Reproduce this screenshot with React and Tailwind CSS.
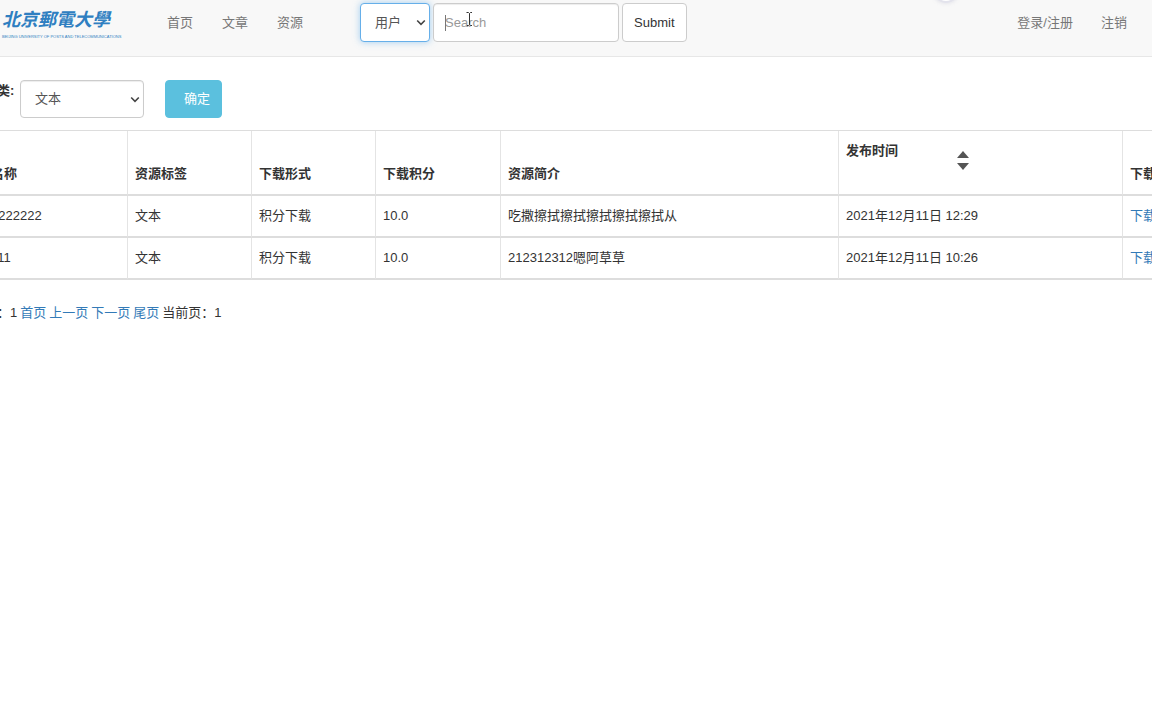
const columns = ["名称", "资源标签", "下载形式", "下载积分", "资源简介", "发布时间", "下载"]

const resources = [
  { name: "2222222", tag: "文本", type: "积分下载", points: "10.0", intro: "吃撒擦拭擦拭擦拭擦拭擦拭从", time: "2021年12月11日 12:29" },
  { name: "111", tag: "文本", type: "积分下载", points: "10.0", intro: "212312312嗯阿草草", time: "2021年12月11日 10:26" },
]

function Chevron() {
  return (
    <svg className="pointer-events-none absolute right-1 top-4 h-2 w-[10px]" viewBox="0 0 10 8" fill="none" stroke="#444" strokeWidth="1.6" aria-hidden="true">
      <path d="M1.2 1.5 L5 5.3 L8.8 1.5" />
    </svg>
  )
}

function Logo() {
  return (
    <a href="#" className="block w-[120px] shrink-0 whitespace-nowrap pt-[3px] pl-[2px] text-[#2f7fc1]">
      <span className="block text-lg leading-7 font-bold italic">北京郵電大學</span>
      <span className="block font-['Liberation_Sans_Narrow','Liberation_Sans',sans-serif] text-[4px] leading-[6px]">
        BEIJING UNIVERSITY OF POSTS AND TELECOMMUNICATIONS
      </span>
    </a>
  )
}

function Navbar() {
  return (
    <nav className="relative flex h-[57px] items-start border-b border-[#e7e7e7] bg-[#f8f8f8] pt-[3px] pr-[25px] text-[#777]">
      <Logo />
      <div className="ml-[47px] flex gap-[29px] leading-10">
        <a href="#">首页</a>
        <a href="#">文章</a>
        <a href="#">资源</a>
      </div>
      <form className="ml-[57px] flex gap-[3px]" onSubmit={(e) => e.preventDefault()}>
        <div className="relative">
          <select aria-label="搜索类型" className="block h-[39px] w-[70px] appearance-none rounded border border-[#66afe9] bg-white pl-[14px] text-[#555] shadow-[0_0_7px_rgba(102,175,233,0.6)] outline-none">
            <option>用户</option>
          </select>
          <Chevron />
        </div>
        <div className="relative">
          <input aria-label="Search" type="text" placeholder="Search" className="block h-[39px] w-[186px] rounded border border-[#ccc] bg-white px-[11px] text-[#555] shadow-[inset_0_1px_1px_rgba(0,0,0,0.075)] outline-none placeholder:text-[#999]" />
          {/* caret and mouse pointer */}
          <span className="pointer-events-none absolute left-3 top-3 h-4 w-px bg-[#777]"></span>
          <svg className="pointer-events-none absolute left-8 top-[9px] h-[14px] w-2" viewBox="0 0 8 14" fill="none" stroke="#333" aria-hidden="true">
            <path d="M1.5 0.5 H3.5 L4.5 1.5 L5.5 0.5 H7 M4.5 1.5 V12.5 M2 13.5 H3.5 L4.5 12.5 L5.5 13.5 H7" />
          </svg>
        </div>
        <button type="submit" className="h-[39px] rounded border border-[#ccc] bg-white px-[11px] text-[#333]">Submit</button>
      </form>
      <div className="ml-auto flex gap-7 leading-10">
        <a href="#">登录/注册</a>
        <a href="#">注销</a>
      </div>
      <div className="absolute right-[193px] -top-[23px] size-[26px] rounded-full border-2 border-[#e3e3ec] bg-white shadow-[0_0_4px_rgba(160,160,190,0.3)]"></div>
    </nav>
  )
}

function SortArrows() {
  return (
    <svg className="h-5 w-3" viewBox="0 0 12 20" fill="#555" aria-hidden="true">
      <path d="M6 0 L12 7 H0 Z" />
      <path d="M0 12 H12 L6 19 Z" />
    </svg>
  )
}

function Cell({ children }) {
  return <td className="border-r border-b-2 border-[#ddd] border-r-[#e4e4e4] px-[7px]">{children}</td>
}

function ResourceTable() {
  return (
    <table className="w-full table-fixed border-separate border-spacing-0 whitespace-nowrap border-t border-[#ddd] text-left">
      <colgroup>
        <col className="w-36" />
        <col className="w-[124px]" />
        <col className="w-[124px]" />
        <col className="w-[125px]" />
        <col />
        <col className="w-[284px]" />
        <col className="w-[61px]" />
      </colgroup>
      <thead>
        <tr className="h-16">
          {columns.map((title) => (
            <th key={title} className="border-r border-b-2 border-[#ddd] border-r-[#e4e4e4] px-[7px] py-[10px] align-bottom font-bold">
              {title === "发布时间" ? (
                <div className="flex h-[43px] items-start">
                  <span className="w-[111px]">{title}</span>
                  <button type="button" aria-label="排序" className="mt-[10px]"><SortArrows /></button>
                </div>
              ) : title}
            </th>
          ))}
        </tr>
      </thead>
      <tbody>
        {resources.map((item) => (
          <tr key={item.name} className="h-[42px]">
            <Cell>{item.name}</Cell>
            <Cell>{item.tag}</Cell>
            <Cell>{item.type}</Cell>
            <Cell>{item.points}</Cell>
            <Cell>{item.intro}</Cell>
            <Cell>{item.time}</Cell>
            <Cell><a href="#" className="text-[#337ab7]">下载</a></Cell>
          </tr>
        ))}
      </tbody>
    </table>
  )
}

export default function App() {
  return (
    <div className="min-h-screen overflow-hidden bg-white font-['Liberation_Sans','Noto_Sans_CJK_SC',sans-serif] text-[13px] leading-5 text-[#333]">
      <Navbar />
      <main className="-ml-4 -mr-8">
        <form className="flex items-start pt-[23px] pb-3" onSubmit={(e) => e.preventDefault()}>
          <label htmlFor="category" className="w-9 pt-px font-bold">分类:</label>
          <div className="relative">
            <select id="category" className="block h-[38px] w-[124px] appearance-none rounded border border-[#ccc] bg-white pl-[14px] text-[#555] shadow-[inset_0_1px_1px_rgba(0,0,0,0.075)] outline-none">
              <option>文本</option>
            </select>
            <Chevron />
          </div>
          <button type="submit" className="ml-[21px] h-[38px] rounded border border-[#5bc0de] bg-[#5bc0de] pr-[11px] pl-[18px] text-white">确定</button>
        </form>
        <ResourceTable />
        <div className="mt-[23px] flex gap-[3px]">
          <span>数：1</span>
          <a href="#" className="text-[#337ab7]">首页</a>
          <a href="#" className="text-[#337ab7]">上一页</a>
          <a href="#" className="text-[#337ab7]">下一页</a>
          <a href="#" className="text-[#337ab7]">尾页</a>
          <span>当前页：1</span>
        </div>
      </main>
    </div>
  )
}
